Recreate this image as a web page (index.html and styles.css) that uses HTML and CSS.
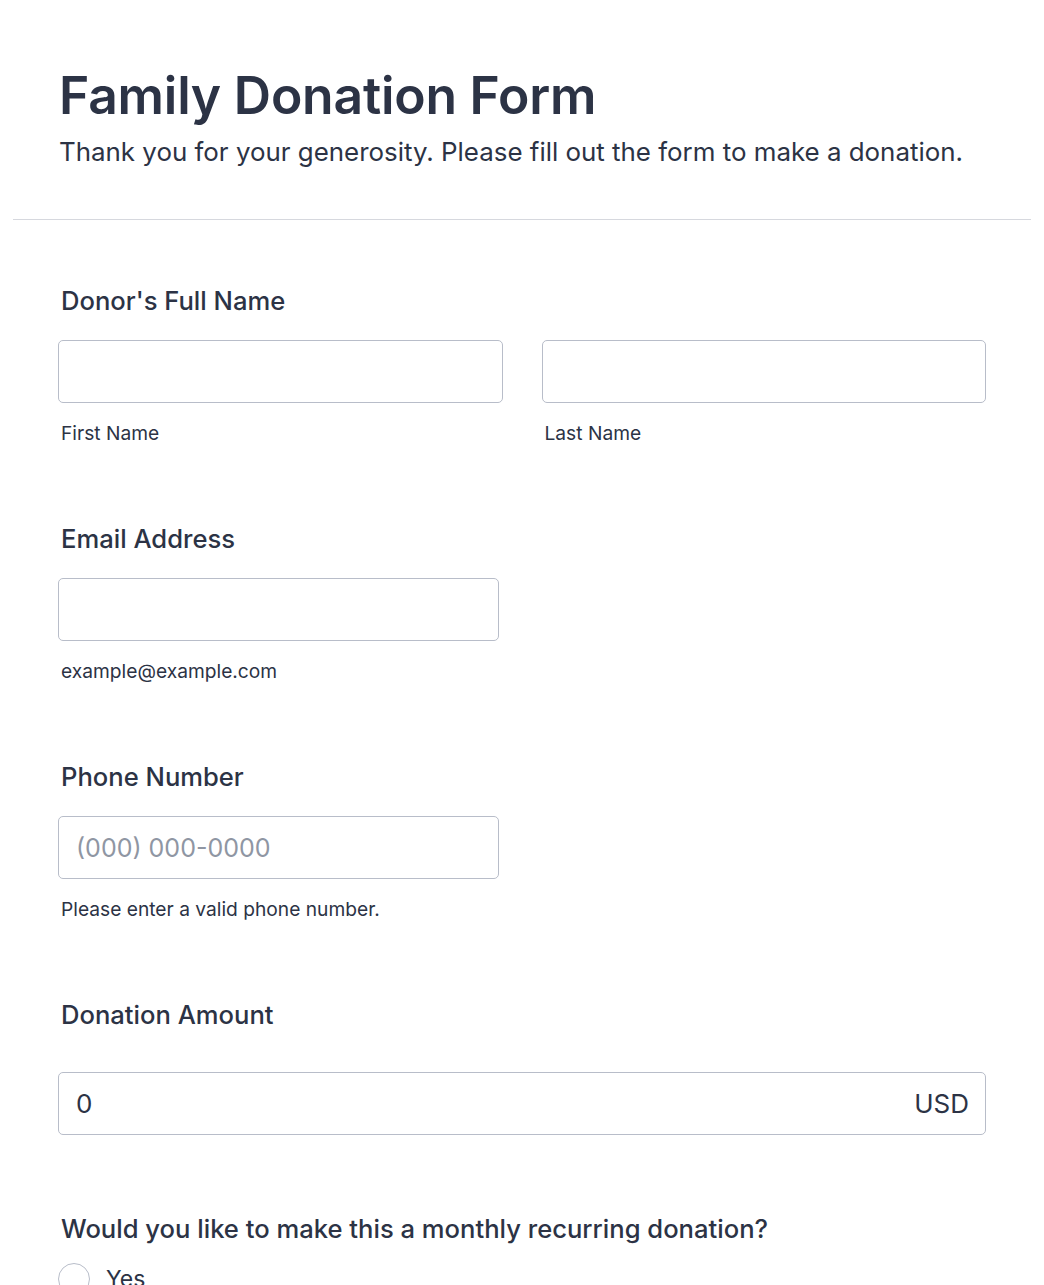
FILE: index.html
```html
<!DOCTYPE html>
<html lang="en">
<head>
    <meta charset="UTF-8">
    <meta name="viewport" content="width=device-width, initial-scale=1.0">
    <title>Family Donation Form</title>
    <link rel="stylesheet" href="styles.css">
</head>
<body>

<div class="form-wrap">
    <div class="form-header">
        <h1>Family Donation Form</h1>
        <p class="subheader">Thank you for your generosity. Please fill out the form to make a donation.</p>
    </div>

    <div class="form-line">
        <label class="form-label">Donor's Full Name</label>
        <div class="name-row">
            <div class="name-field">
                <input type="text" class="form-input" id="firstName">
                <span class="sublabel">First Name</span>
            </div>
            <div class="name-field">
                <input type="text" class="form-input" id="lastName">
                <span class="sublabel">Last Name</span>
            </div>
        </div>
    </div>

    <div class="form-line">
        <label class="form-label" for="email">Email Address</label>
        <div class="half-field">
            <input type="email" class="form-input" id="email">
            <span class="sublabel">example@example.com</span>
        </div>
    </div>

    <div class="form-line">
        <label class="form-label" for="phone">Phone Number</label>
        <div class="half-field">
            <input type="tel" class="form-input" id="phone" placeholder="(000) 000-0000">
            <span class="sublabel">Please enter a valid phone number.</span>
        </div>
    </div>

    <div class="form-line">
        <label class="form-label" for="amount">Donation Amount</label>
        <div class="amount-box">
            <input type="text" class="amount-input" id="amount" value="0">
            <span class="currency">USD</span>
        </div>
    </div>

    <div class="form-line">
        <label class="form-label">Would you like to make this a monthly recurring donation?</label>
        <div class="radio-list">
            <label class="radio-item"><span class="radio-circle"></span>Yes</label>
            <label class="radio-item"><span class="radio-circle"></span>No</label>
        </div>
    </div>
</div>

</body>
</html>
```

FILE: styles.css
```css
body {
    margin: 0;
    background-color: #ffffff;
    font-family: Inter, "Noto Sans", sans-serif;
    color: #2c3345;
}
.form-wrap {
    padding: 0 13px;
}
.form-header {
    padding: 65px 46px 51px;
    border-bottom: 1px solid #d6d8de;
}
h1 {
    margin: 0;
    font-size: 51.6px;
    font-weight: 600;
    line-height: 60px;
    letter-spacing: -0.2px;
}
.subheader {
    margin: 11px 0 0;
    font-size: 25.9px;
    line-height: 32px;
}
.form-line {
    padding: 78px 45px 0;
}
.form-header + .form-line {
    padding-top: 65px;
}
.form-label {
    display: block;
    padding-left: 3px;
    font-size: 25.6px;
    font-weight: 500;
    line-height: 32px;
    margin-bottom: 23px;
}
.name-row {
    display: flex;
    gap: 39px;
}
.name-field {
    width: 445px;
}
.half-field {
    width: 441px;
}
.form-input {
    display: block;
    box-sizing: border-box;
    width: 100%;
    height: 63px;
    padding: 0 17px;
    border: 1px solid #b8bdc9;
    border-radius: 5px;
    font-family: inherit;
    font-size: 25px;
    color: #2c3345;
    background-color: #ffffff;
}
.form-input::placeholder {
    color: #8f96a3;
}
.sublabel {
    display: block;
    margin-top: 18px;
    padding-left: 3px;
    font-size: 19.2px;
    line-height: 24px;
}
.amount-box {
    display: flex;
    align-items: center;
    box-sizing: border-box;
    width: 928px;
    height: 63px;
    margin-top: 41px;
    padding: 0 16px 0 17px;
    border: 1px solid #b8bdc9;
    border-radius: 5px;
}
.amount-input {
    flex: 1;
    border: none;
    outline: none;
    padding: 0;
    font-family: inherit;
    font-size: 26px;
    color: #2c3345;
}
.currency {
    font-size: 26px;
}
.radio-list {
    display: flex;
    flex-direction: column;
    gap: 16px;
    margin-top: -5px;
}
.radio-item {
    display: flex;
    align-items: center;
    gap: 16px;
    font-size: 23px;
}
.radio-circle {
    box-sizing: border-box;
    width: 32px;
    height: 32px;
    border: 1px solid #b8bdc9;
    border-radius: 50%;
}
```
